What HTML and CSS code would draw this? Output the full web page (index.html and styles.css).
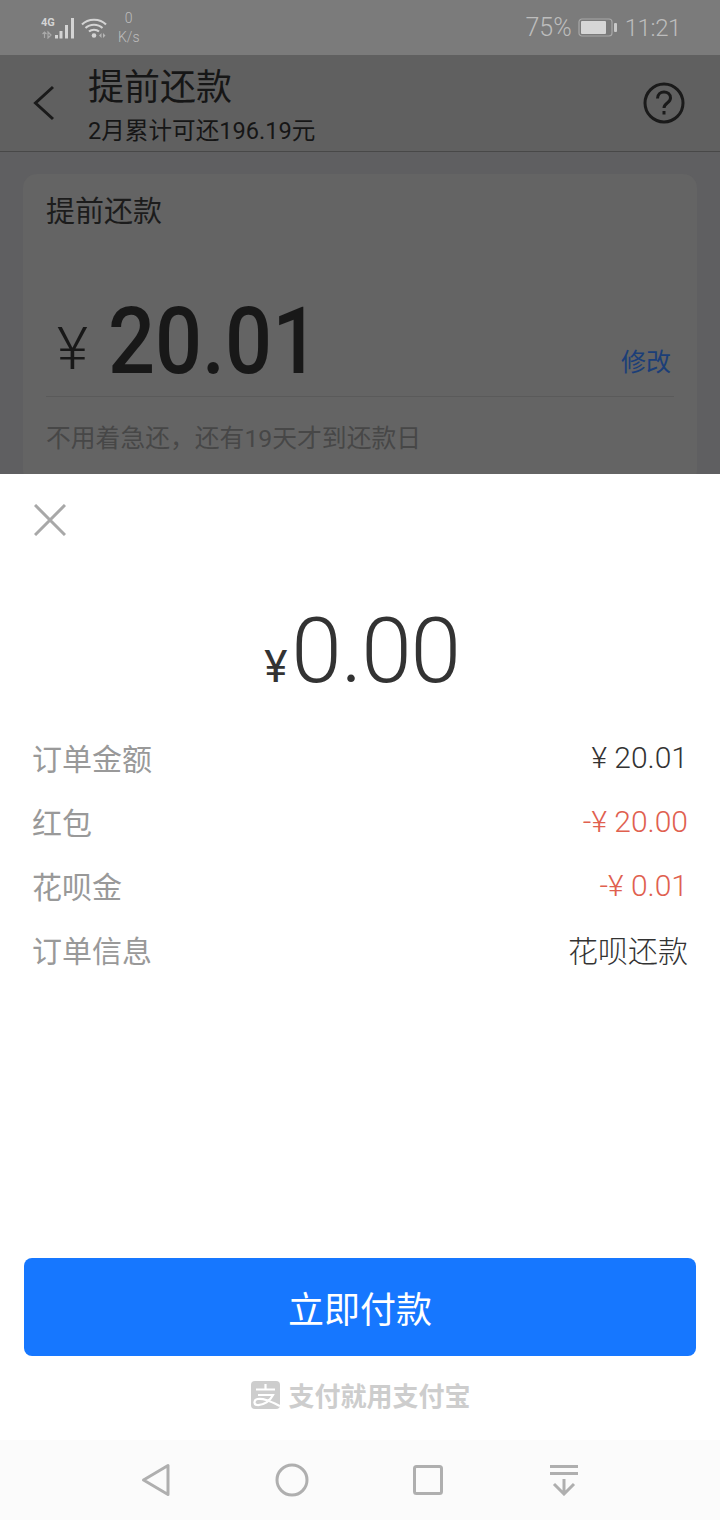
FILE: index.html
```html
<!DOCTYPE html>
<html lang="zh-CN">
<head>
    <meta charset="UTF-8">
    <meta name="viewport" content="width=device-width, initial-scale=1.0">
    <title>提前还款</title>
    <link rel="stylesheet" href="styles.css">
</head>
<body>
    <div class="screen">
        <div class="status-bar">
            <div class="status-left">
                <svg class="signal" width="34" height="22" viewBox="0 0 34 22">
                    <text x="0" y="9" class="net-label">4G</text>
                    <path d="M3.500 15v6M1.500 17l2-2 2 2M7 15l3 3-3 3z" fill="none" stroke="#a9a9a9" stroke-width="1.200"/>
                    <rect x="14" y="18" width="3" height="3.500" fill="#d4d4d4"/>
                    <rect x="18.500" y="14" width="3" height="7.500" fill="#d4d4d4"/>
                    <rect x="24" y="8" width="3" height="13.500" fill="#d4d4d4"/>
                    <rect x="30" y="1" width="3" height="20.500" fill="#d4d4d4"/>
                </svg>
                <svg class="wifi" width="26" height="22" viewBox="0 0 26 22">
                    <path d="M1 7.500C7 1 19 1 25 7.500M4.500 11C9 6.500 17 6.500 21.500 11M8 14.500C10.500 12 15.500 12 18 14.500" fill="none" stroke="#d4d4d4" stroke-width="2"/>
                    <circle cx="13" cy="18.500" r="2.300" fill="#d4d4d4"/>
                    <path d="M20.500 16v5L18 18.500zM22 16v5l2.500-2.500z" fill="#b5b5b5"/>
                </svg>
                <div class="speed"><span>0</span><span>K/s</span></div>
            </div>
            <div class="status-right">
                <span class="battery-text">75%</span>
                <svg width="39" height="20" viewBox="0 0 39 20">
                    <rect x="1" y="1" width="33" height="17" rx="3" fill="none" stroke="#a8a8a8" stroke-width="1.200"/>
                    <rect x="3" y="3" width="25" height="13" rx="1" fill="#d6d6d6"/>
                    <rect x="36" y="5" width="3" height="9" rx="1" fill="#c8c8c8"/>
                </svg>
                <span class="clock">11:21</span>
            </div>
        </div>

        <div class="backdrop">
            <div class="app-header">
                <svg class="back" width="24" height="36" viewBox="0 0 24 36">
                    <path d="M21 2L3.500 18 21 34" fill="none" stroke="#1a1a1a" stroke-width="3"/>
                </svg>
                <div class="header-text">
                    <div class="header-title">提前还款</div>
                    <div class="header-sub">2月累计可还196.19元</div>
                </div>
                <svg class="help" width="42" height="42" viewBox="0 0 42 42">
                    <circle cx="21" cy="21" r="19" fill="none" stroke="#1a1a1a" stroke-width="3"/>
                    <path d="M14.500 16.500c0-9 13-8.500 13-.5 0 5-6.500 5-6.500 10" fill="none" stroke="#1a1a1a" stroke-width="3"/>
                    <rect x="19.500" y="29" width="3" height="3.500" fill="#1a1a1a"/>
                </svg>
            </div>
            <div class="card">
                <div class="card-title">提前还款</div>
                <div class="amount-row">
                    <span class="amount-sign">¥</span>
                    <span class="amount">20.01</span>
                    <span class="edit-link">修改</span>
                </div>
                <div class="card-note">不用着急还，还有19天才到还款日</div>
            </div>
        </div>

        <div class="sheet">
            <svg class="close" width="32" height="32" viewBox="0 0 32 32">
                <path d="M1 1l30 30M31 1L1 31" fill="none" stroke="#a8a8a8" stroke-width="3"/>
            </svg>
            <div class="total"><span class="total-sign">¥</span><span class="total-num">0.00</span></div>
            <div class="detail-list">
                <div class="detail-row"><span class="detail-label">订单金额</span><span class="detail-value">¥ 20.01</span></div>
                <div class="detail-row"><span class="detail-label">红包</span><span class="detail-value discount">-¥ 20.00</span></div>
                <div class="detail-row"><span class="detail-label">花呗金</span><span class="detail-value discount">-¥ 0.01</span></div>
                <div class="detail-row"><span class="detail-label">订单信息</span><span class="detail-value">花呗还款</span></div>
            </div>
            <button class="pay-btn">立即付款</button>
            <div class="brand">
                <svg width="29" height="28" viewBox="0 0 29 28">
                    <rect width="29" height="28" rx="4" fill="#cdcdcd"/>
                    <path d="M5 8.500h19M14.500 3v5.500M7 14h15C19 20 13 24.500 6 24c-3.500-.5-3.500-5 .5-6 6-1 13 2.500 22.500 7" fill="none" stroke="#fff" stroke-width="2.200"/>
                </svg>
                <span>支付就用支付宝</span>
            </div>
        </div>

        <div class="nav-bar">
            <svg width="30" height="34" viewBox="0 0 30 34">
                <path d="M27 2.500v29L2.500 17z" fill="none" stroke="#afafaf" stroke-width="3" stroke-linejoin="round"/>
            </svg>
            <svg width="34" height="34" viewBox="0 0 34 34">
                <circle cx="17" cy="17" r="15" fill="none" stroke="#afafaf" stroke-width="3"/>
            </svg>
            <svg width="30" height="30" viewBox="0 0 30 30">
                <rect x="1.500" y="1.500" width="27" height="27" rx="2" fill="none" stroke="#afafaf" stroke-width="3"/>
            </svg>
            <svg class="nav-last" width="30" height="32" viewBox="0 0 30 32">
                <path d="M1 2.500h28M1 9.500h28M15 15v15M5 20l10 10 10-10" fill="none" stroke="#afafaf" stroke-width="3"/>
            </svg>
        </div>
    </div>
</body>
</html>
```

FILE: styles.css
```css
* {
    box-sizing: border-box;
}

body {
    margin: 0;
    font-family: Roboto, "Noto Sans CJK SC", sans-serif;
}

.screen {
    width: 720px;
    height: 1520px;
    display: flex;
    flex-direction: column;
    overflow: hidden;
    background: #fff;
}

.status-bar {
    height: 55px;
    background: #7b7b7b;
    display: flex;
    justify-content: space-between;
    align-items: center;
    padding: 0 39px 0 41px;
    color: #bdbdbd;
}

.status-left {
    display: flex;
    align-items: center;
    gap: 6px;
}

.net-label {
    font-size: 11px;
    font-weight: 700;
    fill: #d4d4d4;
}

.speed {
    display: flex;
    flex-direction: column;
    align-items: center;
    margin-left: 5px;
    font-size: 14px;
    font-weight: 300;
    line-height: 19px;
}

.status-right {
    display: flex;
    align-items: center;
    gap: 6px;
    font-size: 24px;
    font-weight: 300;
}

.battery-text {
    font-size: 25px;
}

.clock {
    margin-left: 2px;
    letter-spacing: -.4px;
}

.backdrop {
    height: 419px;
    background: #5f5f61;
    overflow: hidden;
}

.app-header {
    height: 97px;
    background: #606060;
    border-bottom: 1px solid #484848;
    display: flex;
    align-items: center;
    padding: 0 35px 0 32px;
}

.back {
    margin-right: 32px;
}

.header-text {
    flex: 1;
    padding-top: 5px;
    color: #161616;
}

.header-title {
    font-size: 36px;
    line-height: 50px;
}

.header-sub {
    margin-top: 1px;
    font-size: 23.600px;
    line-height: 34px;
}

.card {
    margin: 22px 23px 0;
    height: 310px;
    background: #646464;
    border-radius: 14px;
    padding: 18px 23px;
}

.card-title {
    font-size: 29px;
    line-height: 40px;
    color: #1c1c1c;
}

.amount-row {
    display: flex;
    align-items: flex-end;
    height: 165px;
    padding-bottom: 16px;
    border-bottom: 1px solid #5a5a5a;
    color: #181818;
}

.amount-sign {
    font-size: 60px;
    font-weight: 300;
    margin: 0 20px 1px 11px;
    line-height: 60px;
}

.amount {
    font-size: 92px;
    font-weight: 500;
    line-height: 82px;
    margin-bottom: -3px;
    flex: 1;
    transform: scaleX(.9);
    transform-origin: left;
}

.edit-link {
    margin: 0 3px 2px 0;
    font-size: 25px;
    color: #1b3e78;
}

.card-note {
    font-size: 24.800px;
    line-height: 36px;
    margin-top: 24px;
    color: #474747;
}

.sheet {
    flex: 1;
    background: #fff;
    padding: 30px 32px 0 32px;
    display: flex;
    flex-direction: column;
}

.close {
    margin-left: 2px;
}

.total {
    display: flex;
    justify-content: center;
    align-items: baseline;
    height: 110px;
    margin-top: 60px;
    padding-left: 4px;
    color: #333;
}

.total-sign {
    font-size: 44px;
}

.total-num {
    margin-left: 4px;
    font-size: 91px;
    font-weight: 300;
    line-height: 110px;
    letter-spacing: -1.200px;
}

.detail-list {
    margin-top: 19px;
}

.detail-row {
    height: 64px;
    display: flex;
    justify-content: space-between;
    align-items: center;
    font-size: 30px;
}

.detail-label {
    color: #999;
}

.detail-value {
    color: #333;
    font-weight: 300;
}

.discount {
    color: #e0604f;
}

.pay-btn {
    width: 672px;
    height: 98px;
    margin: 277px 0 0 -8px;
    border: 0;
    border-radius: 8px;
    background: #1677ff;
    color: #fff;
    font-family: inherit;
    font-size: 36px;
}

.brand {
    display: flex;
    justify-content: center;
    align-items: center;
    gap: 8px;
    margin-top: 20px;
    padding-left: 2px;
    color: #cdcdcd;
    font-size: 26px;
    font-weight: 700;
}

.nav-bar {
    height: 80px;
    background: #fbfbfb;
    display: flex;
    align-items: center;
    gap: 104px;
    padding: 0 141px;
}

.nav-last {
    margin-left: 2px;
}
```
